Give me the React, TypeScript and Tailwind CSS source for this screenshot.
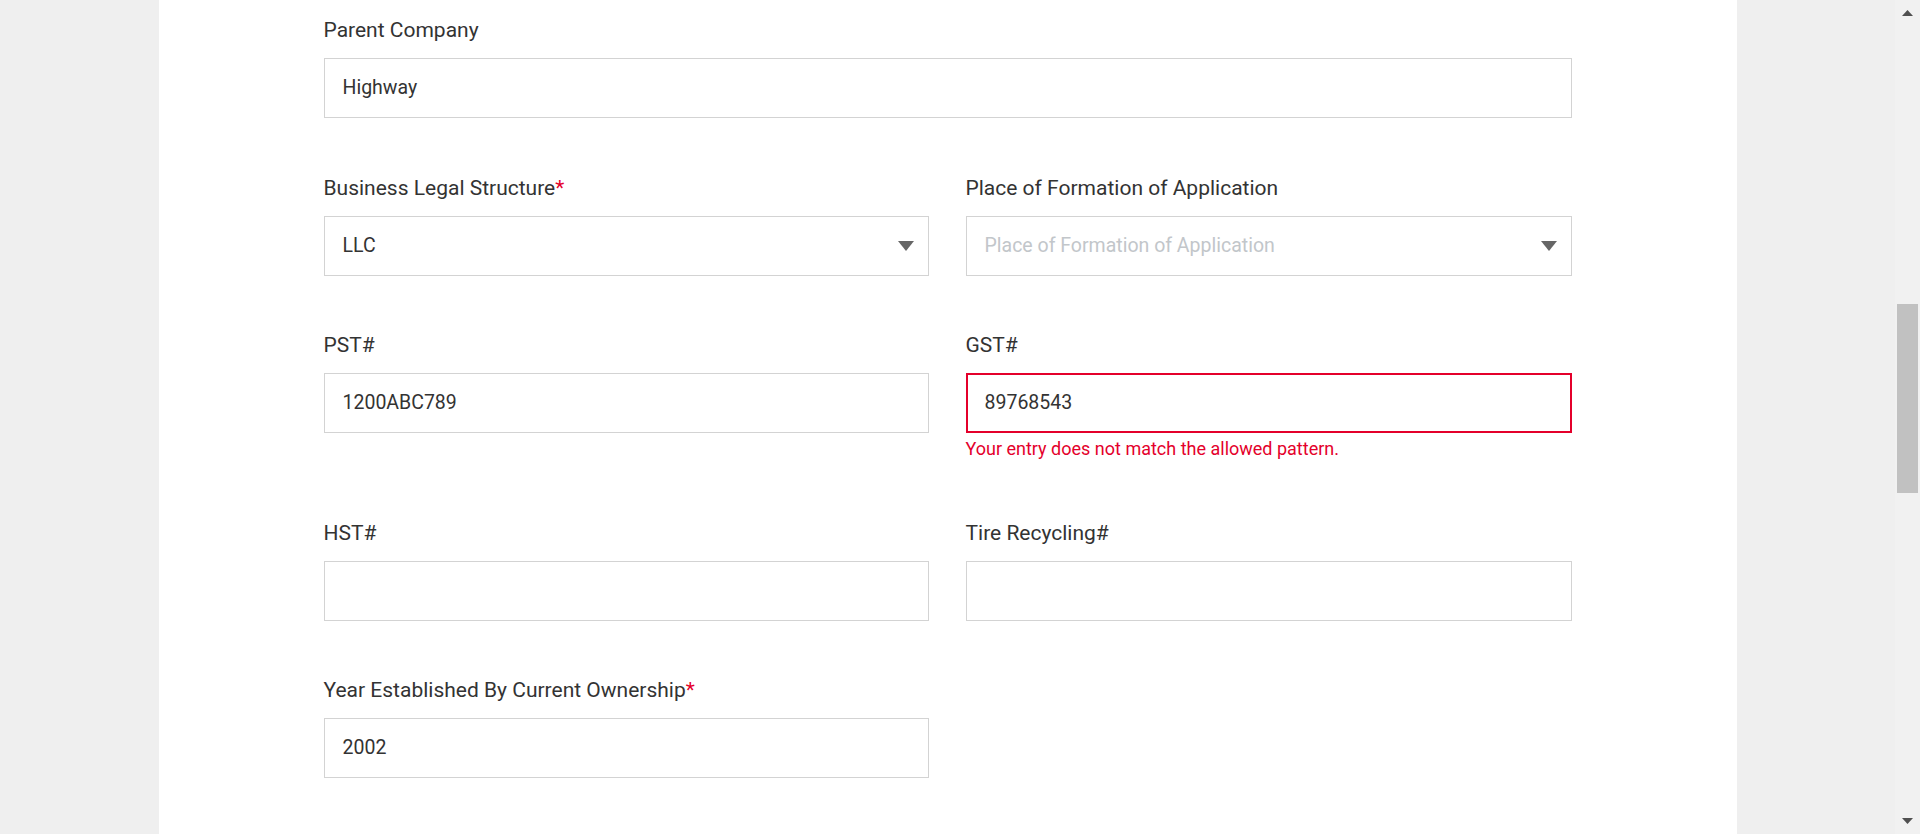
import React from 'react'

const font = { fontFamily: 'Roboto, "Liberation Sans", sans-serif' }

function Label({ text, required }: { text: string; required?: boolean }) {
  return (
    <label className="block text-[21px] leading-[24px] text-[#333333] mb-[16px]">
      {text}
      {required && <span className="text-[#e4002b]">*</span>}
    </label>
  )
}

function TextField({
  label,
  value,
  required,
  error,
}: {
  label: string
  value?: string
  required?: boolean
  error?: string
}) {
  return (
    <div>
      <Label text={label} required={required} />
      <div
        className={
          error
            ? 'h-[60px] border-2 border-[#e4002b] bg-white flex items-center pl-[17px] text-[19.5px] text-[#333333]'
            : 'h-[60px] border border-[#d3d3d3] bg-white flex items-center pl-[18px] text-[19.5px] text-[#333333]'
        }
      >
        {value}
      </div>
      {error && (
        <p className="mt-[5px] mb-[3px] text-[18px] leading-[22px] text-[#e4002b]">{error}</p>
      )}
    </div>
  )
}

function SelectField({
  label,
  value,
  placeholder,
  required,
}: {
  label: string
  value?: string
  placeholder?: string
  required?: boolean
}) {
  return (
    <div>
      <Label text={label} required={required} />
      <div className="h-[60px] border border-[#d3d3d3] bg-white flex items-center justify-between pl-[18px] pr-[14px] text-[19.5px]">
        {value ? (
          <span className="text-[#333333]">{value}</span>
        ) : (
          <span className="text-[#c2c6ca]">{placeholder}</span>
        )}
        <svg width="16" height="10" viewBox="0 0 16 10">
          <path d="M0 0 H16 L8 10 Z" fill="#666666" />
        </svg>
      </div>
    </div>
  )
}

function Scrollbar() {
  return (
    <div className="w-[25px] h-full bg-[#f1f1f1] flex flex-col items-center">
      <div className="h-[26px] w-full flex items-center justify-center">
        <svg width="11" height="6" viewBox="0 0 11 6">
          <path d="M5.5 0 L11 6 H0 Z" fill="#505050" />
        </svg>
      </div>
      <div className="mt-[278px] h-[189px] w-[21px] bg-[#c1c1c1]" />
      <div className="flex-1" />
      <div className="h-[27px] w-full flex items-center justify-center">
        <svg width="11" height="6" viewBox="0 0 11 6">
          <path d="M0 0 H11 L5.5 6 Z" fill="#505050" />
        </svg>
      </div>
    </div>
  )
}

export default function App() {
  return (
    <div className="w-[1920px] h-[834px] overflow-hidden flex bg-[#efefef]" style={font}>
      <div className="flex-1 flex justify-center">
        <div className="w-[1578px] h-full bg-white pl-[165px] pt-[18px]">
          <div className="w-[1248px] grid grid-cols-[605px_606px] gap-x-[37px] gap-y-[57.5px] items-start">
            <div className="col-span-2">
              <TextField label="Parent Company" value="Highway" />
            </div>
            <SelectField label="Business Legal Structure" value="LLC" required />
            <SelectField
              label="Place of Formation of Application"
              placeholder="Place of Formation of Application"
            />
            <TextField label="PST#" value="1200ABC789" />
            <TextField
              label="GST#"
              value="89768543"
              error="Your entry does not match the allowed pattern."
            />
            <TextField label="HST#" />
            <TextField label="Tire Recycling#" />
            <TextField label="Year Established By Current Ownership" value="2002" required />
          </div>
        </div>
      </div>
      <Scrollbar />
    </div>
  )
}
